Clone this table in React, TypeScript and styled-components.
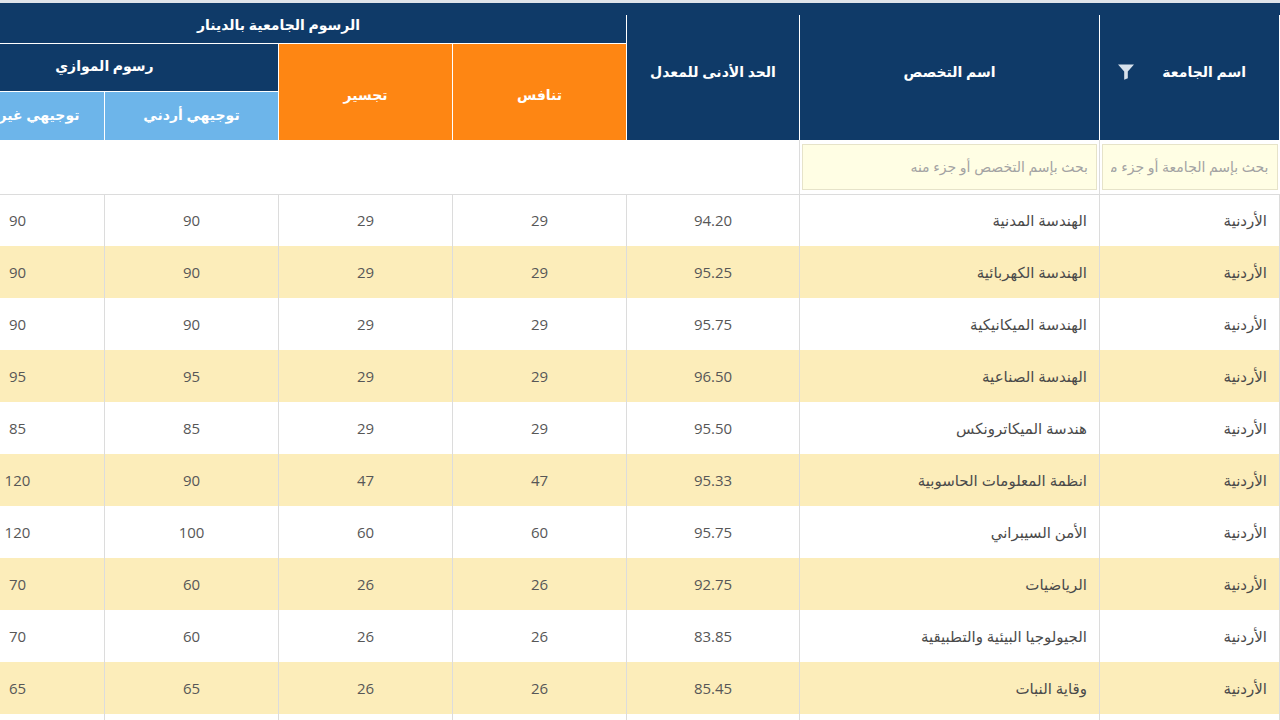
import React from "react";
import styled, { createGlobalStyle } from "styled-components";

// Types
interface MajorRow {
  university: string;
  major: string;
  minAverage: string;
  competition: number;
  bridging: number;
  parallelJo: number;
  parallelForeign: number;
}

const rows: MajorRow[] = [
  { university: "الأردنية", major: "الهندسة المدنية", minAverage: "94.20", competition: 29, bridging: 29, parallelJo: 90, parallelForeign: 90 },
  { university: "الأردنية", major: "الهندسة الكهربائية", minAverage: "95.25", competition: 29, bridging: 29, parallelJo: 90, parallelForeign: 90 },
  { university: "الأردنية", major: "الهندسة الميكانيكية", minAverage: "95.75", competition: 29, bridging: 29, parallelJo: 90, parallelForeign: 90 },
  { university: "الأردنية", major: "الهندسة الصناعية", minAverage: "96.50", competition: 29, bridging: 29, parallelJo: 95, parallelForeign: 95 },
  { university: "الأردنية", major: "هندسة الميكاترونكس", minAverage: "95.50", competition: 29, bridging: 29, parallelJo: 85, parallelForeign: 85 },
  { university: "الأردنية", major: "انظمة المعلومات الحاسوبية", minAverage: "95.33", competition: 47, bridging: 47, parallelJo: 90, parallelForeign: 120 },
  { university: "الأردنية", major: "الأمن السيبراني", minAverage: "95.75", competition: 60, bridging: 60, parallelJo: 100, parallelForeign: 120 },
  { university: "الأردنية", major: "الرياضيات", minAverage: "92.75", competition: 26, bridging: 26, parallelJo: 60, parallelForeign: 70 },
  { university: "الأردنية", major: "الجيولوجيا البيئية والتطبيقية", minAverage: "83.85", competition: 26, bridging: 26, parallelJo: 60, parallelForeign: 70 },
  { university: "الأردنية", major: "وقاية النبات", minAverage: "85.45", competition: 26, bridging: 26, parallelJo: 65, parallelForeign: 65 },
];

// widths from right to left
const columnWidths = [180, 300, 173, 174, 174, 174, 174];

const NAVY = "#0f3a68";
const ORANGE = "#fe8613";
const SKY = "#6db5ea";
const HEAD_LINE = "rgba(255, 255, 255, 0.55)";
const CELL_LINE = "#dcdcdc";

const GlobalStyle = createGlobalStyle`
  html, body {
    margin: 0;
    padding: 0;
    background: #ffffff;
  }
  body {
    direction: rtl;
    overflow: hidden;
    font-family: "Open Sans", "DejaVu Sans", sans-serif;
  }
`;

// Styled Components
const Page = styled.div`
  width: 1280px;
  height: 720px;
  overflow: hidden;
  border-top: 3px solid #dfe4ea;
  box-sizing: border-box;
`;

const HeaderCap = styled.div`
  height: 12px;
  background: ${NAVY};
  width: 1280px;
`;

const Table = styled.table`
  width: 1349px;
  table-layout: fixed;
  border-collapse: collapse;
  border-spacing: 0;
`;

const HeadRow = styled.tr<{ $height: number }>`
  height: ${({ $height }) => $height}px;
`;

type Tone = "navy" | "orange" | "sky";

const toneColor: Record<Tone, string> = {
  navy: NAVY,
  orange: ORANGE,
  sky: SKY,
};

const HeadCell = styled.th<{ $tone?: Tone; $shift?: number; $top?: boolean }>`
  background: ${({ $tone = "navy" }) => toneColor[$tone]};
  color: #ffffff;
  font-size: 14px;
  font-weight: 600;
  text-align: center;
  vertical-align: middle;
  padding: ${({ $shift = 0 }) =>
    $shift >= 0 ? `0 6px ${$shift}px` : `${-$shift}px 6px 0`};
  border: 1px solid ${HEAD_LINE};
  border-top: ${({ $top }) => ($top ? "none" : `1px solid ${HEAD_LINE}`)};
  border-bottom: none;
  white-space: nowrap;
  overflow: hidden;
`;

const UniversityHead = styled.div`
  display: flex;
  align-items: center;
  justify-content: flex-start;
  gap: 27px;
  padding-right: 27px;
`;

const FilterIcon = styled.svg`
  width: 18px;
  height: 17px;
  flex: none;
`;

const FilterRow = styled.tr`
  height: 54px;
  border-bottom: 1px solid ${CELL_LINE};
`;

const FilterCell = styled.td<{ $bordered?: boolean }>`
  padding: 3px 2px;
  border-left: ${({ $bordered }) => ($bordered ? `1px solid ${CELL_LINE}` : "none")};
  background: #ffffff;
`;

const SearchInput = styled.input`
  display: block;
  width: 100%;
  height: 46px;
  box-sizing: border-box;
  border: 1px solid #e6e3c9;
  background: #fffee4;
  padding: 0 8px;
  font-family: "Open Sans", "DejaVu Sans", sans-serif;
  font-size: 14px;
  color: #555555;
  direction: rtl;
  outline: none;

  &::placeholder {
    color: #a3a3a3;
  }
`;

const BodyRow = styled.tr<{ $striped: boolean }>`
  height: 52px;
  background: ${({ $striped }) => ($striped ? "#fcedba" : "#ffffff")};
`;

const BodyCell = styled.td<{ $align?: "right" | "center"; $numeric?: boolean }>`
  text-align: ${({ $align = "center" }) => $align};
  padding: 0 ${({ $align }) => ($align === "right" ? "12px" : "4px")};
  font-size: 15px;
  color: ${({ $numeric }) => ($numeric ? "#575757" : "#4a4a4a")};
  border-left: 1px solid ${CELL_LINE};
  border-right: 1px solid ${CELL_LINE};
  white-space: nowrap;
  overflow: hidden;
`;

const TailRow = styled.tr`
  height: 52px;
  background: #ffffff;
`;

const TailCell = styled.td`
  border-left: 1px solid ${CELL_LINE};
  border-right: 1px solid ${CELL_LINE};
`;

const FunnelIcon: React.FC = () => (
  <FilterIcon viewBox="0 0 18 17" aria-hidden>
    <path d="M1 1.5h16l-6.2 7v6.8l-3.6 1.4v-8.2z" fill="#d7e1ec" />
  </FilterIcon>
);

const App: React.FC = () => {
  return (
    <Page>
      <GlobalStyle />
      <HeaderCap />
      <Table>
        <colgroup>
          {columnWidths.map((width, index) => (
            <col key={index} style={{ width }} />
          ))}
        </colgroup>
        <thead>
          <HeadRow $height={28}>
            <HeadCell rowSpan={3} $top $shift={12}>
              <UniversityHead>
                <span>اسم الجامعة</span>
                <FunnelIcon />
              </UniversityHead>
            </HeadCell>
            <HeadCell rowSpan={3} $top $shift={12}>
              اسم التخصص
            </HeadCell>
            <HeadCell rowSpan={3} $top $shift={12}>
              الحد الأدنى للمعدل
            </HeadCell>
            <HeadCell colSpan={4} $top $shift={8}>
              الرسوم الجامعية بالدينار
            </HeadCell>
          </HeadRow>
          <HeadRow $height={48}>
            <HeadCell rowSpan={2} $tone="orange" $shift={-6}>
              تنافس
            </HeadCell>
            <HeadCell rowSpan={2} $tone="orange" $shift={-6}>
              تجسير
            </HeadCell>
            <HeadCell colSpan={2} $shift={4}>
              رسوم الموازي
            </HeadCell>
          </HeadRow>
          <HeadRow $height={49}>
            <HeadCell $tone="sky" $shift={2}>
              توجيهي أردني
            </HeadCell>
            <HeadCell $tone="sky" $shift={2}>
              توجيهي غير أردني
            </HeadCell>
          </HeadRow>
        </thead>
        <tbody>
          <FilterRow>
            <FilterCell $bordered>
              <SearchInput placeholder="بحث بإسم الجامعة أو جزء منه" />
            </FilterCell>
            <FilterCell $bordered>
              <SearchInput placeholder="بحث بإسم التخصص أو جزء منه" />
            </FilterCell>
            <FilterCell colSpan={5} />
          </FilterRow>
          {rows.map((row, index) => (
            <BodyRow key={index} $striped={index % 2 === 1}>
              <BodyCell $align="right">{row.university}</BodyCell>
              <BodyCell $align="right">{row.major}</BodyCell>
              <BodyCell $numeric>{row.minAverage}</BodyCell>
              <BodyCell $numeric>{row.competition}</BodyCell>
              <BodyCell $numeric>{row.bridging}</BodyCell>
              <BodyCell $numeric>{row.parallelJo}</BodyCell>
              <BodyCell $numeric>{row.parallelForeign}</BodyCell>
            </BodyRow>
          ))}
          <TailRow>
            {columnWidths.map((_, index) => (
              <TailCell key={index} />
            ))}
          </TailRow>
        </tbody>
      </Table>
    </Page>
  );
};

export default App;
